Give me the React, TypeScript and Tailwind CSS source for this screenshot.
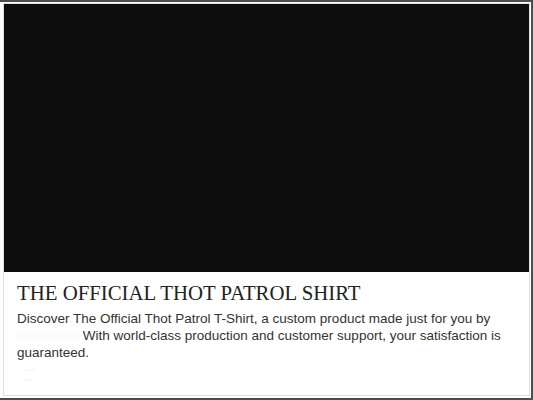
import React from 'react';

export default function App() {
  return (
    <div className="w-[533px] h-[400px] bg-white border-t-2 border-r-2 border-b-2 border-[#4d4d4d] pt-[1px] pl-[3px] pr-[1px] pb-[2px] flex">
      <div className="flex-1 flex flex-col border border-[#dedede] bg-white">
        <div className="h-[268px] bg-[#0d0d0d] shrink-0" />
        <div className="px-[13px] pt-[8px]">
          <h1
            className="text-[20.8px] leading-[26px] text-[#222]"
            style={{ fontFamily: 'Georgia, "Liberation Serif", serif' }}
          >
            THE OFFICIAL THOT PATROL SHIRT
          </h1>
          <p
            className="mt-[4px] text-[13.5px] leading-[17px] text-[#333]"
            style={{ fontFamily: '"Liberation Sans", Arial, sans-serif' }}
          >
            Discover The Official Thot Patrol T-Shirt, a custom product made just for you by{' '}
            <span className="inline-block w-[62px] h-[10px] bg-[#fcfcfc] align-middle" />
            {' '}With world-class production and customer support, your satisfaction is guaranteed.
          </p>
          <div className="mt-[8px] ml-[6px] flex flex-col gap-[8px]">
            <div className="w-[12px] h-[2px] bg-[#f6f9f8]" />
            <div className="w-[10px] h-[2px] bg-[#f6f9f8]" />
          </div>
        </div>
      </div>
    </div>
  );
}
